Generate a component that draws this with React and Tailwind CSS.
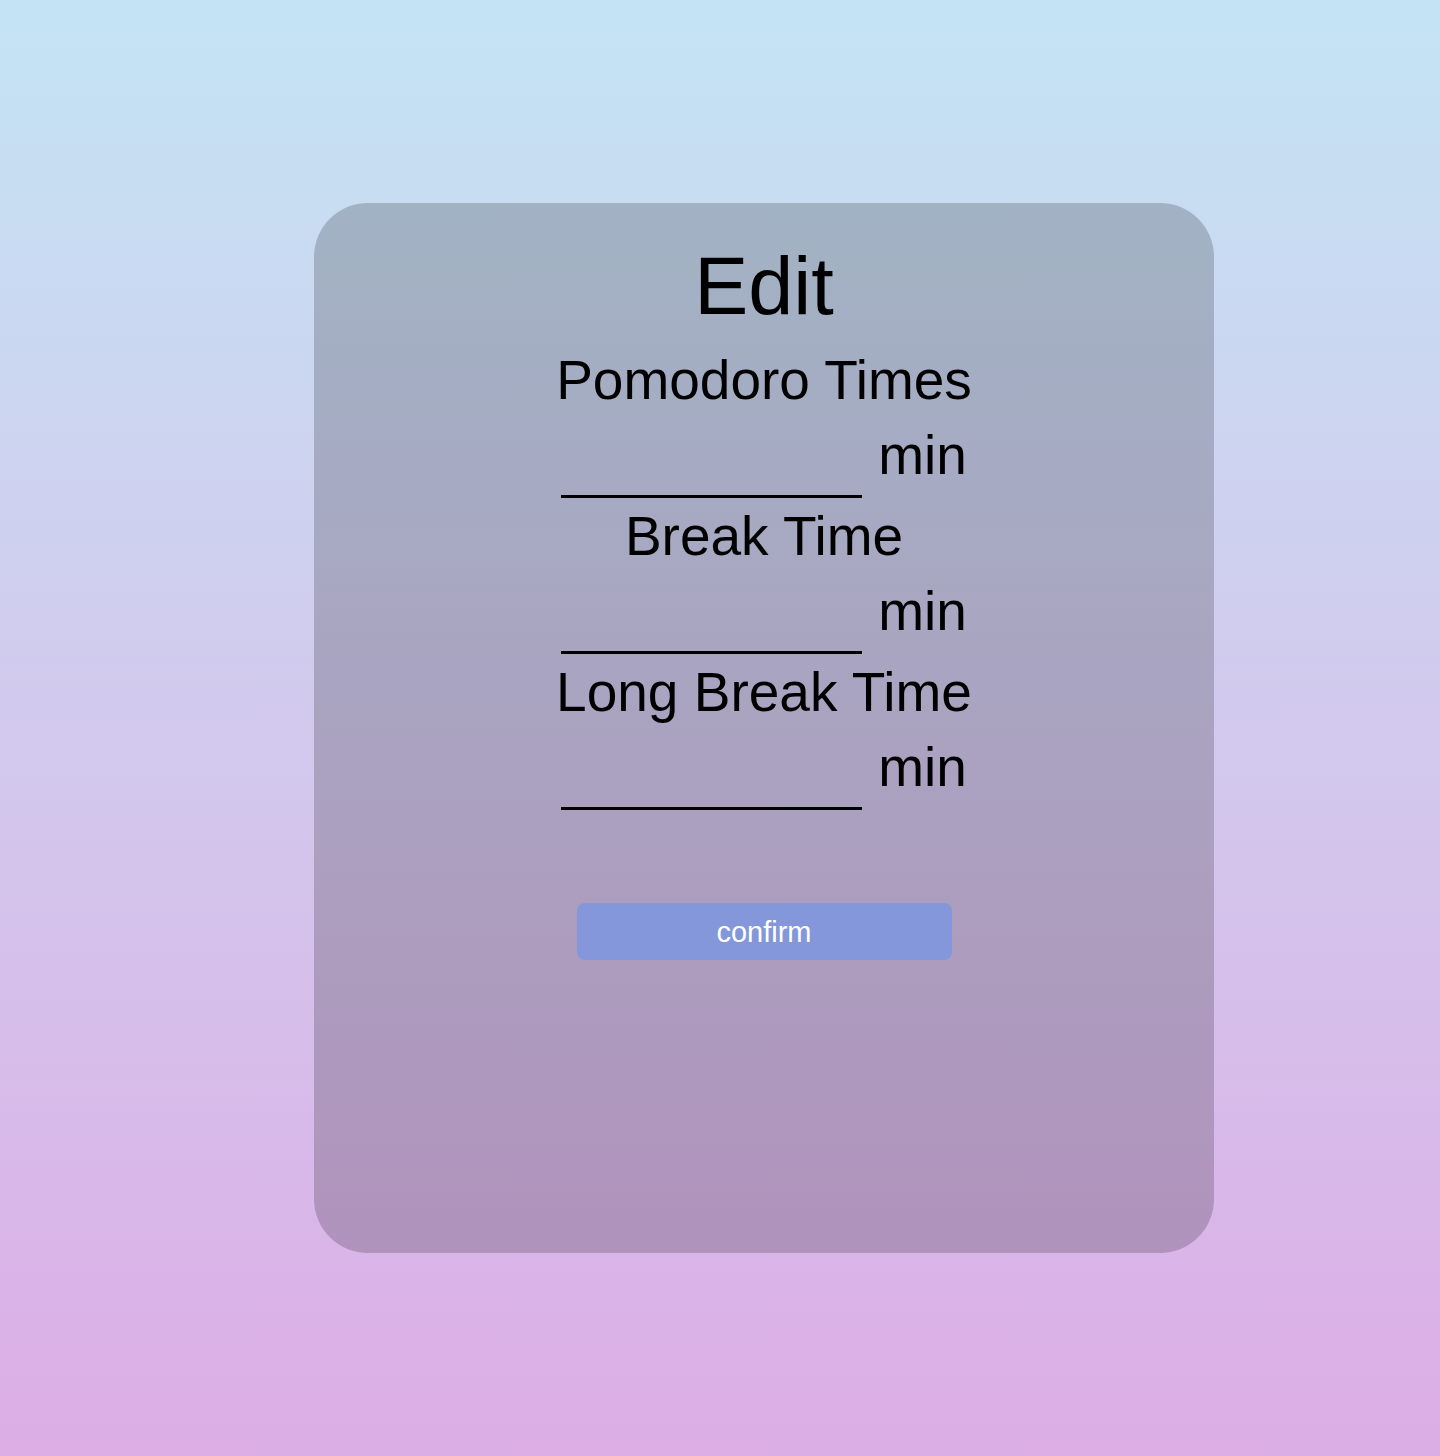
import { useState } from "react";

const fields = [
  { key: "pomodoro", label: "Pomodoro Times" },
  { key: "break", label: "Break Time" },
  { key: "long", label: "Long Break Time" },
];

export default function App() {
  const [values, setValues] = useState({ pomodoro: "", break: "", long: "" });

  return (
    <div
      className="min-h-[1456px] w-full bg-gradient-to-b from-[#c3e4f4] to-[#dcade6] pt-[203px]"
      style={{ fontFamily: '"Liberation Sans", Arial, sans-serif' }}
    >
      <div className="ml-[314px] flex h-[1050px] w-[900px] flex-col items-center rounded-[54px] bg-black/[0.19] pt-[43px] text-black">
        <h1 className="text-[81px] leading-none">Edit</h1>

        <div className="mt-[26px] flex flex-col items-center">
          {fields.map((f) => (
            <div key={f.key} className="flex flex-col items-center pb-[11px]">
              <label className="text-[55px] leading-none">{f.label}</label>
              <div className="mt-[20px] flex items-start gap-[16px]">
                <input
                  value={values[f.key]}
                  onChange={(e) => setValues({ ...values, [f.key]: e.target.value })}
                  className="h-[70px] w-[301px] border-b-[3px] border-black bg-transparent text-[40px] outline-none"
                />
                <span className="text-[55px] leading-none">min</span>
              </div>
            </div>
          ))}
        </div>

        {/* confirm */}
        <button className="mt-[82px] h-[57px] w-[375px] rounded-lg bg-[#8397da] pt-[3px] text-[29px] text-white">
          confirm
        </button>
      </div>
    </div>
  );
}
